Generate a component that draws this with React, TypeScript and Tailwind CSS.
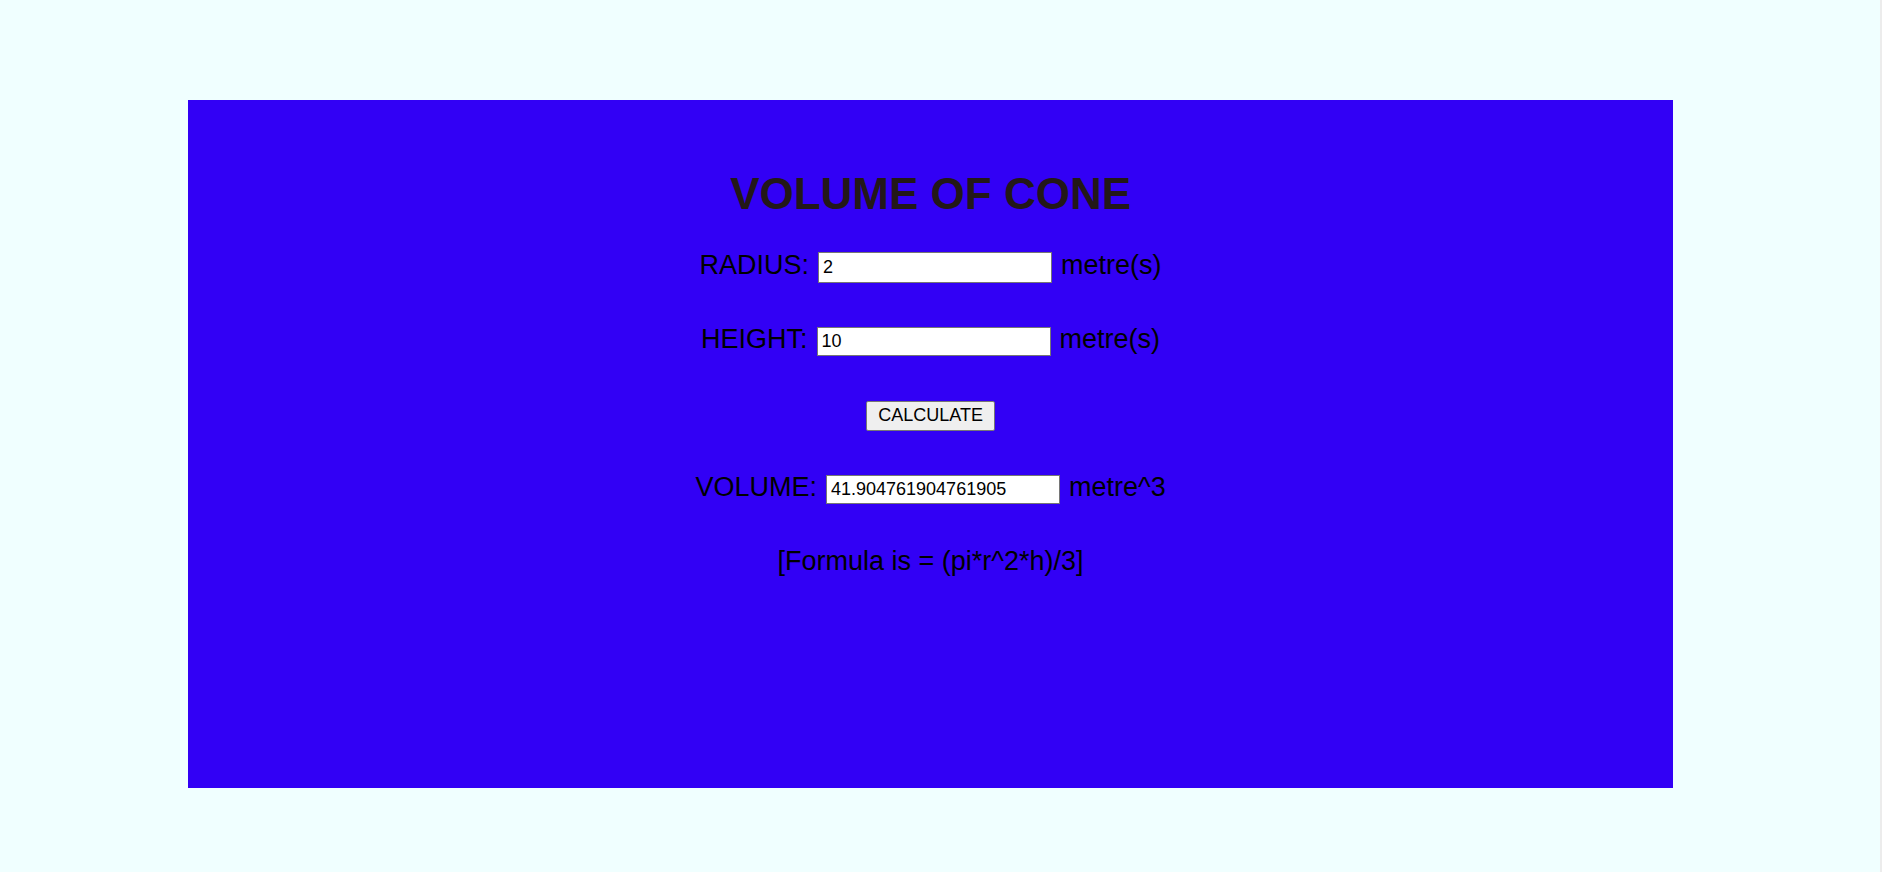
import { useState } from "react";

const font = { fontFamily: '"Liberation Sans", Arial, sans-serif' };

function Row({
  label,
  value,
  unit,
  inputClass,
  onChange,
}: {
  label: string;
  value: string;
  unit: string;
  inputClass: string;
  onChange?: (v: string) => void;
}) {
  return (
    <div className="flex h-[31px] items-center gap-[9px] text-[27px] leading-[31px] text-black">
      <span className="mb-[5px]">{label}</span>
      <input
        type="text"
        value={value}
        onChange={(e) => onChange?.(e.target.value)}
        className={`w-[234px] border border-[#767676] bg-white px-[4px] text-[18px] text-black outline-none ${inputClass}`}
      />
      <span className="mb-[5px]">{unit}</span>
    </div>
  );
}

export default function App() {
  const [radius, setRadius] = useState("2");
  const [height, setHeight] = useState("10");
  const [volume, setVolume] = useState("41.904761904761905");

  // the page used 22/7 for pi, hence the odd figure
  const calculate = () => {
    const r = parseFloat(radius);
    const h = parseFloat(height);
    setVolume(String(((22 / 7) * r * r * h) / 3));
  };

  return (
    <div className="flex h-[872px] w-full bg-[#f0ffff]" style={font}>
      <div className="flex-1">
        <div className="ml-[10%] mt-[100px] flex h-[688px] w-[79%] flex-col items-center bg-[#3200f5] pt-[69px]">
          <h1 className="text-[44px] font-bold leading-[49px] text-[#231818]">
            VOLUME OF CONE
          </h1>
          <div className="mt-[34px] flex flex-col items-center gap-[43px]">
            <Row
              label="RADIUS:"
              value={radius}
              unit="metre(s)"
              inputClass="h-[31px]"
              onChange={setRadius}
            />
            <Row
              label="HEIGHT:"
              value={height}
              unit="metre(s)"
              inputClass="h-[29px]"
              onChange={setHeight}
            />
            <div className="flex h-[31px] items-center">
              <button
                onClick={calculate}
                className="h-[30px] w-[129px] rounded-[2px] border border-[#767676] bg-[#efefef] text-[18px] text-black"
              >
                CALCULATE
              </button>
            </div>
            <Row
              label="VOLUME:"
              value={volume}
              unit="metre^3"
              inputClass="h-[29px]"
              onChange={setVolume}
            />
            <div className="flex h-[31px] items-center text-[27px] leading-[31px] text-black">
              <span className="mb-[5px]">[Formula is = (pi*r^2*h)/3]</span>
            </div>
          </div>
        </div>
      </div>
      <div className="w-[2px] bg-[#ececec]" />
    </div>
  );
}
